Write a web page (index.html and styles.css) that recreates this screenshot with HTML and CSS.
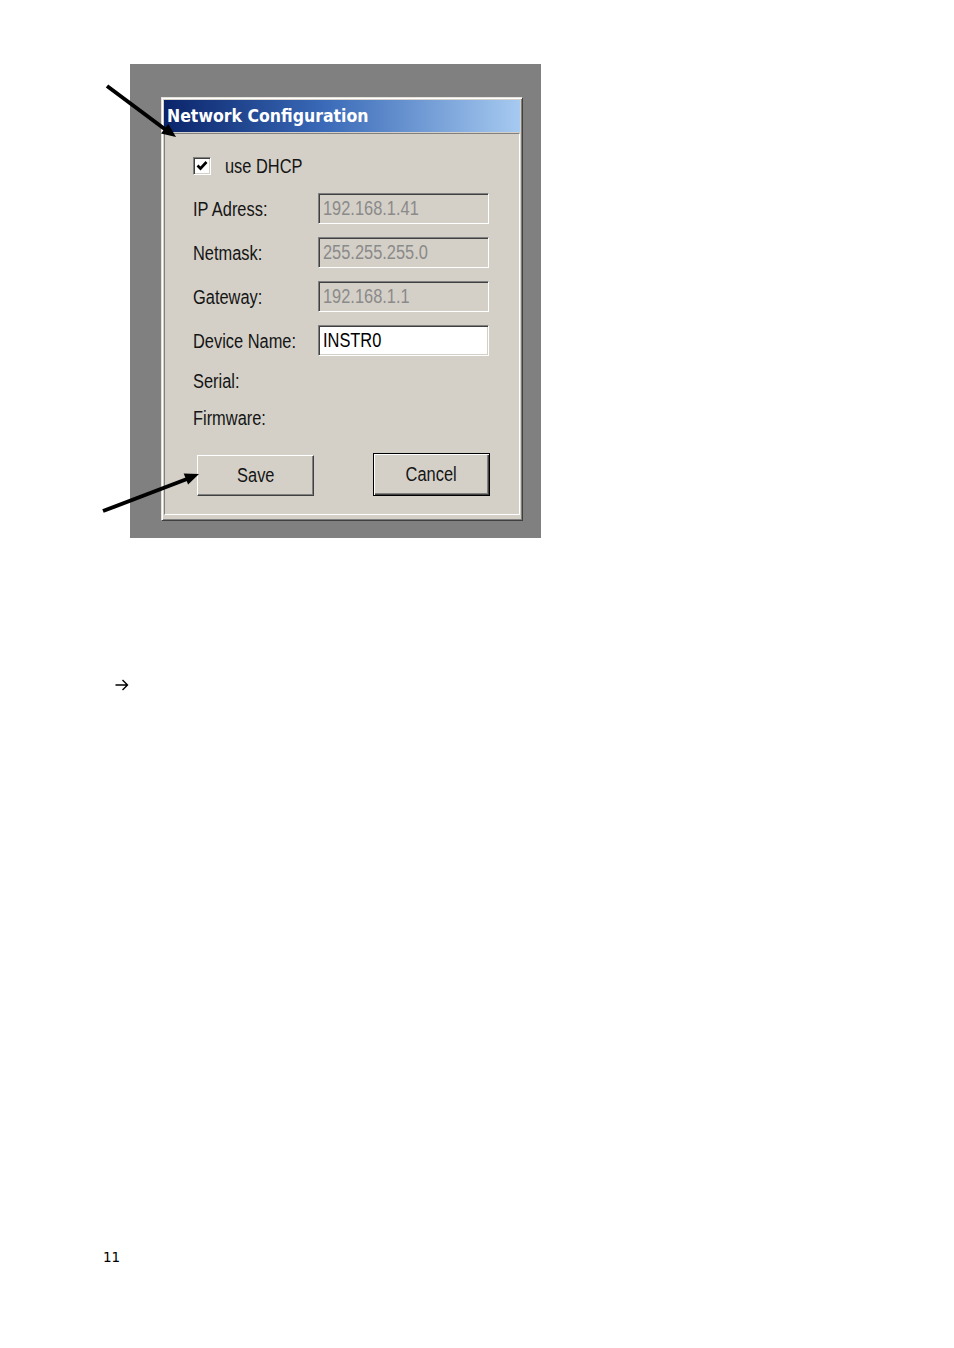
FILE: index.html
```html
<!DOCTYPE html>
<html>
<head>
<meta charset="utf-8">
<title>Network Configuration</title>
<link rel="stylesheet" href="styles.css">
</head>
<body>
<div class="page">
  <div class="shot">
    <div class="dialog">
      <div class="titlebar">Network Configuration</div>
      <div class="panel">
        <div class="check-row">
          <span class="checkbox"><svg width="14" height="14" viewBox="0 0 14 14"><path d="M2.5 6.5 L5.5 9.5 L11.5 3" fill="none" stroke="#000" stroke-width="2.6"/></svg></span>
          <span class="check-label t">use DHCP</span>
        </div>
        <div class="fields">
          <span class="label"><span class="t">IP Adress:</span></span><div class="field disabled"><span class="t">192.168.1.41</span></div>
          <span class="label"><span class="t">Netmask:</span></span><div class="field disabled"><span class="t">255.255.255.0</span></div>
          <span class="label"><span class="t">Gateway:</span></span><div class="field disabled"><span class="t">192.168.1.1</span></div>
          <span class="label"><span class="t">Device Name:</span></span><div class="field"><span class="t">INSTR0</span></div>
        </div>
        <div class="info serial"><span class="t">Serial:</span></div>
        <div class="info firmware"><span class="t">Firmware:</span></div>
        <div class="buttons">
          <div class="btn save"><span class="t c">Save</span></div>
          <div class="btn default"><span class="t c">Cancel</span></div>
        </div>
      </div>
    </div>
  </div>
  <p class="note"><svg class="note-arrow" width="14" height="12" viewBox="0 0 14 12"><path d="M0.5 6 H12.5 M7.5 1 L12.5 6 L7.5 11" fill="none" stroke="#000" stroke-width="1.4"/></svg></p>
  <div class="pagenum">11</div>
  <svg class="arrows" width="954" height="560" viewBox="0 0 954 560">
    <line x1="107" y1="86" x2="166" y2="130" stroke="#000" stroke-width="4"/>
    <polygon points="176,137 161,133.5 168.3,123.9" fill="#000"/>
    <line x1="103" y1="511" x2="187" y2="479" stroke="#000" stroke-width="4"/>
    <polygon points="199,474 188.1,484.6 183.7,473.4" fill="#000"/>
  </svg>
</div>
</body>
</html>
```

FILE: styles.css
```css
html, body {
  margin: 0;
  padding: 0;
  background: #fff;
}

.page {
  position: relative;
  width: 954px;
  height: 1348px;
  padding-top: 64px;
  box-sizing: border-box;
}

.shot {
  margin-left: 130px;
  width: 411px;
  height: 474px;
  background: #808080;
  padding: 33px 0 0 31px;
  box-sizing: border-box;
}

.dialog {
  width: 362px;
  box-sizing: border-box;
  background: #d4d0c8;
  border: 1px solid;
  border-color: #e4e1da #404040 #404040 #e4e1da;
  box-shadow: inset 1px 1px 0 #ffffff, inset -1px -1px 0 #808080;
  padding: 2px;
}

.titlebar {
  height: 32px;
  line-height: 32px;
  padding-left: 3px;
  background: linear-gradient(to right, #0a246a 0%, #3a6ab8 45%, #a6caf0 100%);
  color: #fff;
  font-family: "DejaVu Sans Condensed", "DejaVu Sans", sans-serif;
  font-weight: bold;
  font-size: 17.5px;
  white-space: nowrap;
}

.panel {
  margin-top: 1px;
  margin-bottom: 3px;
  border: 1px solid;
  border-color: #808080 #ffffff #ffffff #808080;
  padding: 23px 0 18px 28px;
  font-family: "Liberation Sans", Arial, sans-serif;
  font-size: 20px;
  color: #151515;
}

.t {
  display: inline-block;
  white-space: nowrap;
  transform: scaleX(0.82);
  transform-origin: left center;
}

.t.c {
  transform-origin: center center;
}

.check-row {
  display: flex;
  align-items: center;
  height: 18px;
  margin-bottom: 18px;
}

.checkbox {
  width: 18px;
  height: 18px;
  flex: none;
  box-sizing: border-box;
  background: #fff;
  border: 1px solid;
  border-color: #808080 #ffffff #ffffff #808080;
  box-shadow: inset 1px 1px 0 #404040, inset -1px -1px 0 #d4d0c8;
  display: flex;
  align-items: center;
  justify-content: center;
}

.checkbox svg {
  display: block;
}

.check-label {
  margin-left: 14px;
  line-height: 20px;
}

.fields {
  display: grid;
  grid-template-columns: 125px 171px;
  grid-auto-rows: 31px;
  row-gap: 13px;
  align-items: center;
}

.label {
  line-height: 20px;
  white-space: nowrap;
}

.field {
  height: 31px;
  box-sizing: border-box;
  background: #fff;
  border: 1px solid;
  border-color: #808080 #ffffff #ffffff #808080;
  box-shadow: inset 1px 1px 0 #404040, inset -1px -1px 0 #d4d0c8;
  padding-left: 4px;
  line-height: 29px;
  color: #000;
  white-space: nowrap;
  overflow: hidden;
}

.field.disabled {
  background: #d4d0c8;
  color: #8a8a8a;
}

.info {
  line-height: 20px;
}

.serial {
  margin-top: 15px;
}

.firmware {
  margin-top: 17px;
}

.buttons {
  display: flex;
  align-items: flex-end;
  gap: 59px;
  margin-top: 25px;
  padding-left: 4px;
}

.btn {
  width: 117px;
  box-sizing: border-box;
  display: flex;
  align-items: center;
  justify-content: center;
  background: #d4d0c8;
}

.btn.save {
  height: 41px;
  border: 1px solid;
  border-color: #ffffff #404040 #404040 #ffffff;
  box-shadow: inset -1px -1px 0 #808080;
}

.btn.default {
  height: 43px;
  border: 1px solid #000;
  box-shadow: inset 1px 1px 0 #ffffff, inset -1px -1px 0 #404040, inset -2px -2px 0 #808080;
}

.note {
  margin: 137px 0 0 115px;
  height: 20px;
  display: flex;
  align-items: center;
}

.note-arrow {
  display: block;
}

.pagenum {
  margin: 552px 0 0 103px;
  font-family: "DejaVu Sans", sans-serif;
  font-size: 13.5px;
  line-height: 20px;
  color: #000;
}

.arrows {
  position: absolute;
  left: 0;
  top: 0;
  pointer-events: none;
}
```
